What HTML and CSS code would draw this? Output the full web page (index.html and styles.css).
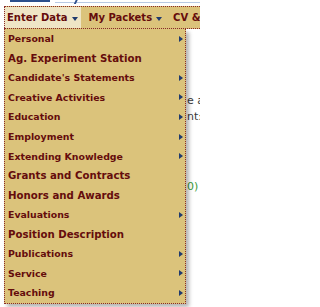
FILE: index.html
```html
<!DOCTYPE html>
<html>
<head>
<meta charset="utf-8">
<link rel="stylesheet" href="styles.css">
</head>
<body>
<div class="top">
  <span class="logo"></span>
  <span class="search"><span class="slash"></span></span>
</div>
<nav class="nav">
  <div class="nav-item active">Enter Data <span class="caret"></span></div>
  <div class="nav-item">My Packets <span class="caret"></span></div>
  <div class="nav-item">CV &amp;</div>
</nav>
<main class="content">
  <p class="line">e a</p>
  <p class="line">nt:</p>
  <p class="line gap green">0)</p>
</main>
<ul class="menu">
  <li class="sub">Personal <span class="arrow"></span></li>
  <li class="leaf">Ag. Experiment Station</li>
  <li class="sub">Candidate's Statements <span class="arrow"></span></li>
  <li class="sub">Creative Activities <span class="arrow"></span></li>
  <li class="sub">Education <span class="arrow"></span></li>
  <li class="sub">Employment <span class="arrow"></span></li>
  <li class="sub">Extending Knowledge <span class="arrow"></span></li>
  <li class="leaf">Grants and Contracts</li>
  <li class="leaf">Honors and Awards</li>
  <li class="sub">Evaluations <span class="arrow"></span></li>
  <li class="leaf">Position Description</li>
  <li class="sub">Publications <span class="arrow"></span></li>
  <li class="sub">Service <span class="arrow"></span></li>
  <li class="sub">Teaching <span class="arrow"></span></li>
</ul>
</body>
</html>
```
FILE: styles.css
```css
html, body {
  margin: 0;
  padding: 0;
  background: #ffffff;
  overflow: hidden;
  width: 200px;
  height: 307px;
  font-family: "DejaVu Sans", Verdana, sans-serif;
}
.top {
  height: 6px;
  display: flex;
  align-items: flex-start;
}
.logo {
  display: block;
  margin-left: 10px;
  width: 40px;
  height: 2px;
  background: #2c4f8c;
}
.search {
  display: block;
  margin-left: 5px;
  flex: 1;
  height: 2px;
  border-bottom: 1px solid #b7c9e3;
  position: relative;
}
.slash {
  position: absolute;
  left: 20px;
  top: -1px;
  width: 2px;
  height: 5px;
  background: #2c4f8c;
  transform: skewX(-25deg);
}
.nav {
  display: flex;
  gap: 6px;
  margin-left: 4px;
  height: 21px;
  background: #dbc37b;
  border-top: 1px dotted #8a2a2a;
  border-bottom: 1px dotted #8a2a2a;
  white-space: nowrap;
}
.nav-item {
  display: flex;
  align-items: center;
  gap: 4px;
  padding: 0 3px 0 2px;
  font-size: 10px;
  font-weight: bold;
  color: #650c0c;
}
.nav-item.active {
  background: #efe5c6;
  border-left: 1px dotted #8a2a2a;
  padding-left: 2px;
}
.caret {
  display: block;
  width: 0;
  height: 0;
  border-top: 4px solid #1f3a6e;
  border-left: 3px solid transparent;
  border-right: 3px solid transparent;
  margin-top: 2px;
}
.content {
  padding: 64px 0 0 187px;
  font-size: 11px;
  color: #3a3a3a;
  white-space: nowrap;
}
.line {
  margin: 0;
  line-height: 16px;
}
.line.gap {
  margin-top: 54px;
}
.green {
  color: #3a9a3a;
}
.menu {
  position: absolute;
  left: 4px;
  top: 29px;
  width: 180px;
  margin: 0;
  padding: 0;
  list-style: none;
  background: #dbc37b;
  border-left: 1px dotted #8a2a2a;
  border-right: 1px dotted #8a2a2a;
  border-bottom: 1px dotted #8a2a2a;
  box-shadow: 3px 3px 4px rgba(0, 0, 0, 0.3);
}
.menu li {
  display: flex;
  align-items: center;
  justify-content: space-between;
  height: 19.55px;
  padding: 0 2px 0 3px;
  font-weight: bold;
  color: #650c0c;
  white-space: nowrap;
}
.menu li.sub {
  font-size: 9.4px;
}
.menu li.leaf {
  font-size: 10.2px;
}
.arrow {
  display: block;
  width: 0;
  height: 0;
  border-left: 4px solid #1f3a6e;
  border-top: 3px solid transparent;
  border-bottom: 3px solid transparent;
}
```
